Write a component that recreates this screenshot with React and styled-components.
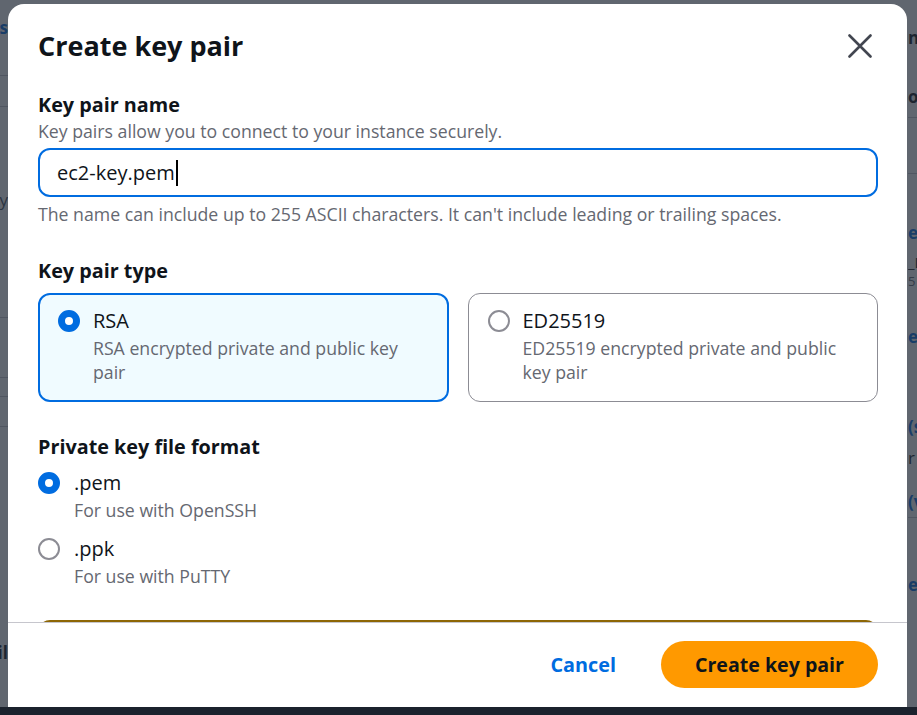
import React from "react";
import styled, { createGlobalStyle } from "styled-components";

// colours
const blue = "#006ce0";
const ink = "#0f141a";
const muted = "#656871";
const rule = "#c6c6cd";
const font = `"Open Sans", "Noto Sans", Arial, sans-serif`;

const GlobalStyle = createGlobalStyle`
  html, body {
    margin: 0;
    padding: 0;
  }
  body {
    font-family: ${font};
    background: #1b222d;
  }
  * {
    box-sizing: border-box;
  }
`;

const Screen = styled.div`
  width: 917px;
  height: 715px;
  display: flex;
  flex-direction: column;
  overflow: hidden;
`;

const Viewport = styled.div`
  position: relative;
  flex: 1;
  display: flex;
  background: #ffffff;
  overflow: hidden;
`;

const Taskbar = styled.div`
  height: 8px;
  background: #1b222d;
`;

// the page that sits behind the dialog, only its edges show
const Strip = styled.div`
  width: ${(p) => p.$w}px;
  display: flex;
  flex-direction: column;
  overflow: hidden;
`;

const Gutter = styled.div`
  flex: 1;
`;

const StripRow = styled.div`
  height: ${(p) => p.$h}px;
  line-height: ${(p) => p.$h}px;
  flex-shrink: 0;
  display: flex;
  align-items: center;
  justify-content: ${(p) => (p.$side === "left" ? "flex-end" : "flex-start")};
  white-space: nowrap;
  overflow: hidden;
  font-size: ${(p) => p.$size || 17}px;
  font-weight: ${(p) => (p.$bold ? 700 : 400)};
  color: ${(p) => p.$color || ink};
  background: ${(p) => (p.$line ? rule : "transparent")};
`;

const Overlay = styled.div`
  position: absolute;
  inset: 0;
  background: rgba(35, 43, 55, 0.72);
  padding: 4px 10px 0 8px;
  display: flex;
`;

const Modal = styled.div`
  width: 899px;
  height: 703px;
  background: #ffffff;
  border-radius: 16px 16px 0 0;
  display: flex;
  flex-direction: column;
  overflow: hidden;
`;

const Header = styled.div`
  display: flex;
  align-items: center;
  justify-content: space-between;
  padding: 24px 29px 28px 30px;
`;

const Title = styled.h2`
  margin: 0;
  font-size: 27px;
  line-height: 36px;
  font-weight: 700;
  color: ${ink};
`;

const CloseButton = styled.button`
  width: 36px;
  height: 36px;
  padding: 0;
  border: 0;
  background: none;
  display: flex;
  align-items: center;
  justify-content: center;
  cursor: pointer;
`;

const Body = styled.div`
  flex: 1;
  overflow: hidden;
  padding: 0 29px 0 30px;
  display: flex;
  flex-direction: column;
  gap: 32px;
`;

const Field = styled.div`
  display: flex;
  flex-direction: column;
  flex-shrink: 0;
`;

const Label = styled.div`
  font-size: 19.8px;
  line-height: 26px;
  font-weight: 700;
  color: ${ink};
`;

const Description = styled.div`
  font-size: 17.7px;
  line-height: 24px;
  color: ${muted};
  margin-top: ${(p) => p.$mt || 0}px;
`;

const TextInput = styled.div`
  margin-top: 5px;
  height: 49px;
  border: 2px solid ${blue};
  border-radius: 12px;
  padding: 0 17px;
  display: flex;
  align-items: center;
  font-size: 20px;
  color: ${ink};
`;

const Caret = styled.span`
  width: 2px;
  height: 26px;
  background: #000000;
  margin-left: 1px;
`;

const TileGrid = styled.div`
  margin-top: 9px;
  display: grid;
  grid-template-columns: 1fr 1fr;
  gap: 19px;
`;

const Tile = styled.label`
  display: flex;
  align-items: flex-start;
  gap: 13px;
  border-radius: 12px;
  border: ${(p) => (p.$checked ? `2px solid ${blue}` : "1px solid #8c8c94")};
  background: ${(p) => (p.$checked ? "#f0fbff" : "#ffffff")};
  padding: ${(p) => (p.$checked ? "13px 18px 16px" : "14px 19px 17px")};
`;

const Radio = styled.span`
  flex-shrink: 0;
  width: 22px;
  height: 22px;
  margin-top: 2px;
  border-radius: 50%;
  background: #ffffff;
  border: ${(p) => (p.$checked ? `7px solid ${blue}` : "2px solid #8c8c94")};
`;

const OptionText = styled.div`
  display: flex;
  flex-direction: column;
`;

const OptionLabel = styled.div`
  font-size: 20px;
  line-height: 26px;
  color: ${ink};
`;

const RadioList = styled.div`
  margin-top: 10px;
  display: flex;
  flex-direction: column;
  gap: 14px;
`;

const RadioRow = styled.label`
  display: flex;
  align-items: flex-start;
  gap: 14px;
`;

const Alert = styled.div`
  flex-shrink: 0;
  height: 90px;
  border: 2px solid #8d6605;
  border-radius: 12px;
  background: #fffef0;
`;

const Footer = styled.div`
  border-top: 1px solid ${rule};
  padding: 18px 29px 19px;
  display: flex;
  justify-content: flex-end;
  align-items: center;
`;

const LinkButton = styled.button`
  border: 0;
  background: none;
  padding: 4px 20px;
  font-family: ${font};
  font-size: 19.8px;
  font-weight: 700;
  color: ${blue};
  cursor: pointer;
`;

const PrimaryButton = styled.button`
  margin-left: 25px;
  height: 47px;
  padding: 0 34px;
  border: 0;
  border-radius: 24px;
  background: #ff9900;
  font-family: ${font};
  font-size: 19.6px;
  font-weight: 700;
  color: ${ink};
  cursor: pointer;
`;

const leftEdge = [
  { h: 18 },
  { h: 20, text: "Instances", color: blue, bold: true },
  { h: 37 },
  { h: 1, line: true },
  { h: 30 },
  { h: 1, line: true },
  { h: 83 },
  { h: 20, text: "y", color: "#414d5c" },
  { h: 107 },
  { h: 1, line: true },
  { h: 59 },
  { h: 1, line: true },
  { h: 18 },
  { h: 1, line: true },
  { h: 29 },
  { h: 1, line: true },
  { h: 216 },
  { h: 20, text: "Detail", bold: true },
];

const rightEdge = [
  { h: 28 },
  { h: 20, text: "name", bold: true },
  { h: 39 },
  { h: 20, text: "open", bold: true },
  { h: 10 },
  { h: 1, line: true },
  { h: 55 },
  { h: 1, line: true },
  { h: 49 },
  { h: 20, text: "edit", color: blue, bold: true },
  { h: 11 },
  { h: 17, text: "_Linux", size: 15 },
  { h: 2 },
  { h: 17, text: "5", color: muted, size: 13 },
  { h: 37 },
  { h: 20, text: "elastic", color: blue, bold: true },
  { h: 70 },
  { h: 20, text: "(ssh)", color: blue, bold: true },
  { h: 11 },
  { h: 20, text: "r" },
  { h: 24 },
  { h: 20, text: "(vpc)", color: blue, bold: true },
  { h: 5 },
  { h: 1, line: true },
  { h: 57 },
  { h: 20, text: "elastic", color: blue, bold: true },
];

const EdgeStrip = ({ rows, side, width }) => (
  <Strip $w={width}>
    {rows.map((r, i) => (
      <StripRow
        key={i}
        $h={r.h}
        $side={side}
        $line={r.line}
        $bold={r.bold}
        $color={r.color}
        $size={r.size}
      >
        {r.text}
      </StripRow>
    ))}
  </Strip>
);

const CloseIcon = () => (
  <svg width="24" height="24" viewBox="0 0 24 24" fill="none">
    <path
      d="M1.5 1.5 L22.5 22.5 M22.5 1.5 L1.5 22.5"
      stroke="#424650"
      strokeWidth="2.6"
      strokeLinecap="round"
    />
  </svg>
);

const keyTypes = [
  { id: "rsa", label: "RSA", desc: "RSA encrypted private and public key pair", checked: true },
  { id: "ed", label: "ED25519", desc: "ED25519 encrypted private and public key pair", checked: false },
];

const formats = [
  { id: "pem", label: ".pem", desc: "For use with OpenSSH", checked: true },
  { id: "ppk", label: ".ppk", desc: "For use with PuTTY", checked: false },
];

const App = () => {
  return (
    <>
      <GlobalStyle />
      <Screen>
        <Viewport>
          <EdgeStrip rows={leftEdge} side="left" width={8} />
          <Gutter />
          <EdgeStrip rows={rightEdge} side="right" width={9} />

          <Overlay>
            <Modal>
              <Header>
                <Title>Create key pair</Title>
                <CloseButton aria-label="Close">
                  <CloseIcon />
                </CloseButton>
              </Header>

              <Body>
                <Field>
                  <Label>Key pair name</Label>
                  <Description $mt={1}>Key pairs allow you to connect to your instance securely.</Description>
                  <TextInput>
                    ec2-key.pem
                    <Caret />
                  </TextInput>
                  <Description $mt={5}>
                    The name can include up to 255 ASCII characters. It can't include leading or trailing spaces.
                  </Description>
                </Field>

                <Field>
                  <Label>Key pair type</Label>
                  <TileGrid>
                    {keyTypes.map((t) => (
                      <Tile key={t.id} $checked={t.checked}>
                        <Radio $checked={t.checked} />
                        <OptionText>
                          <OptionLabel>{t.label}</OptionLabel>
                          <Description $mt={2}>{t.desc}</Description>
                        </OptionText>
                      </Tile>
                    ))}
                  </TileGrid>
                </Field>

                <Field>
                  <Label>Private key file format</Label>
                  <RadioList>
                    {formats.map((f) => (
                      <RadioRow key={f.id}>
                        <Radio $checked={f.checked} />
                        <OptionText>
                          <OptionLabel>{f.label}</OptionLabel>
                          <Description $mt={2}>{f.desc}</Description>
                        </OptionText>
                      </RadioRow>
                    ))}
                  </RadioList>
                </Field>

                <Alert />
              </Body>

              <Footer>
                <LinkButton>Cancel</LinkButton>
                <PrimaryButton>Create key pair</PrimaryButton>
              </Footer>
            </Modal>
          </Overlay>
        </Viewport>
        <Taskbar />
      </Screen>
    </>
  );
};

export default App;
